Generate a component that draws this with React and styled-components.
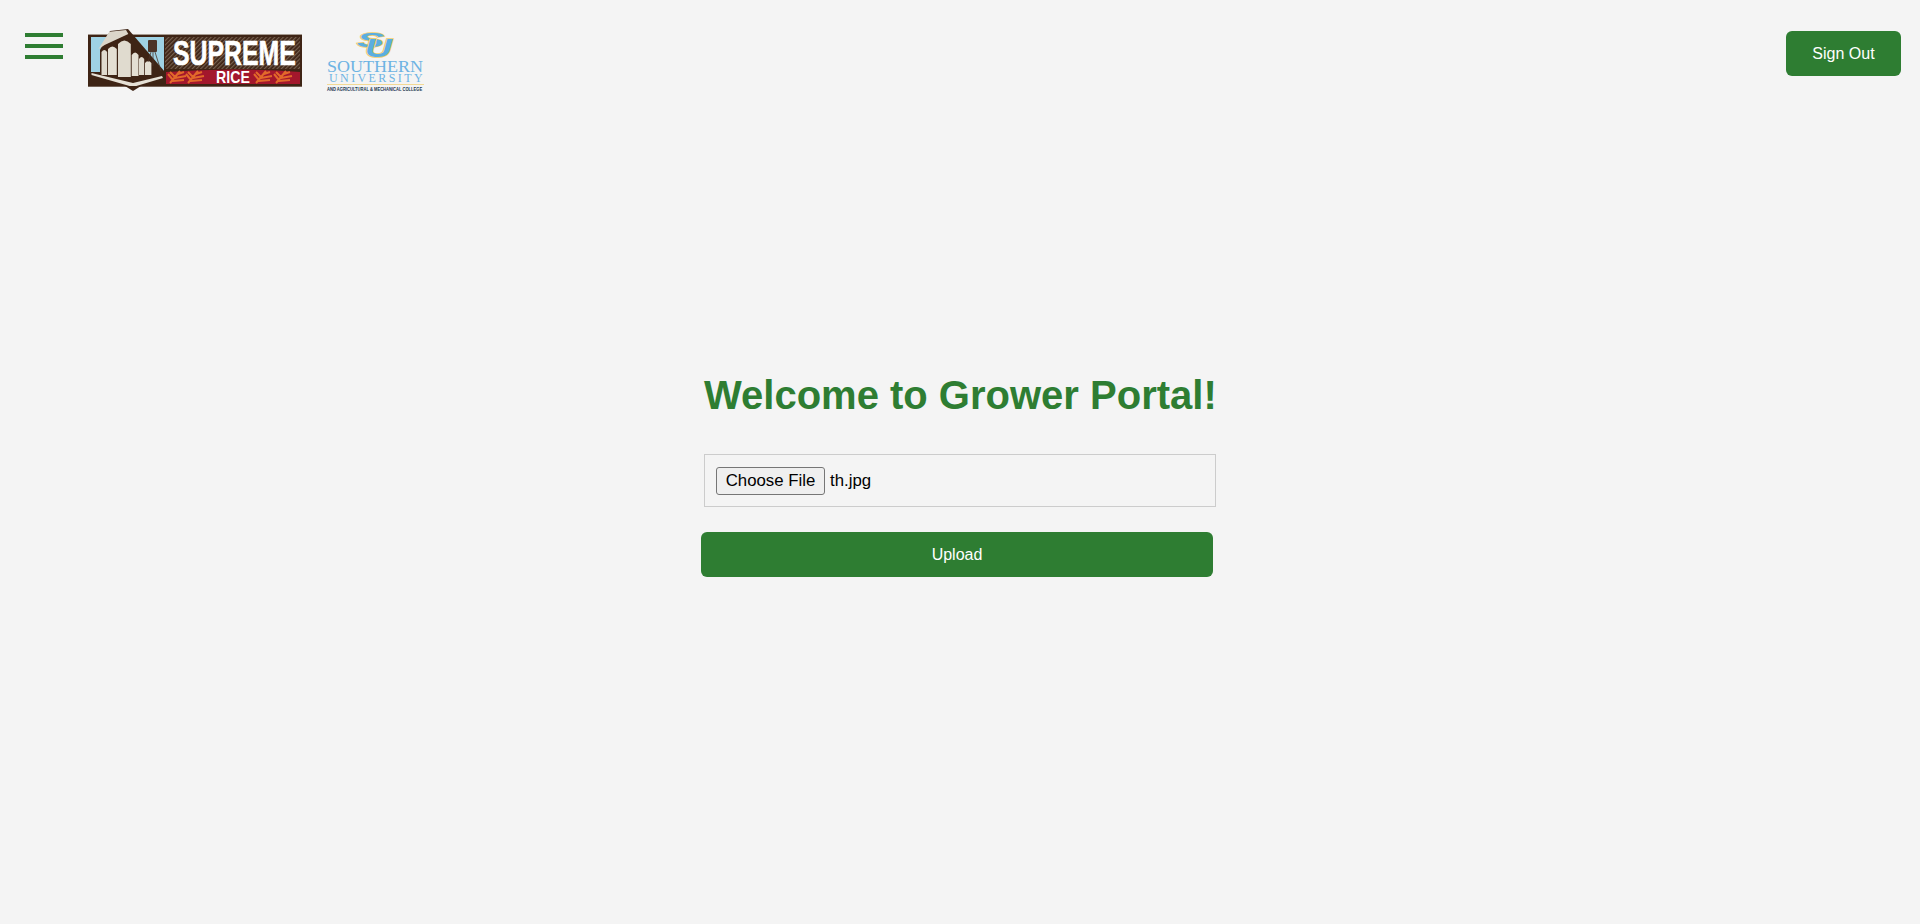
import React from 'react';
import styled, { createGlobalStyle } from 'styled-components';

const GlobalStyle = createGlobalStyle`
  html, body {
    margin: 0;
    padding: 0;
    background-color: #f4f4f4;
    font-family: "Liberation Sans", Arial, sans-serif;
  }
`;

const Page = styled.div`
  min-height: 924px;
  box-sizing: border-box;
  display: flex;
  flex-direction: column;
`;

const Header = styled.header`
  display: flex;
  align-items: flex-start;
  padding: 28px 19px 0 25px;
`;

const MenuButton = styled.button`
  display: flex;
  flex-direction: column;
  gap: 7.5px;
  width: 38px;
  margin: 5px 25px 0 0;
  padding: 0;
  border: none;
  background: none;
  cursor: pointer;
`;

const MenuBar = styled.span`
  display: block;
  height: 3.5px;
  background-color: #2e7d32;
`;

const Logos = styled.div`
  display: flex;
  align-items: flex-start;
  gap: 24px;
  flex: 1;
`;

const GreenButton = styled.button`
  background-color: #2e7d32;
  color: #fff;
  border: none;
  border-radius: 6px;
  font-family: inherit;
  font-size: 16px;
  height: 45px;
  cursor: pointer;
`;

const SignOut = styled(GreenButton)`
  width: 115px;
  margin-top: 3px;
`;

const Main = styled.main`
  display: flex;
  justify-content: center;
  padding-top: 279px;
`;

const Form = styled.form`
  width: 512px;
  display: flex;
  flex-direction: column;
`;

const Title = styled.h1`
  margin: 0 0 36px;
  color: #2e7d32;
  font-size: 40px;
  line-height: 46px;
  font-weight: 700;
  text-align: center;
  white-space: nowrap;
`;

const FileBox = styled.div`
  display: flex;
  align-items: center;
  gap: 5px;
  box-sizing: border-box;
  height: 53px;
  padding: 0 11px;
  border: 1px solid #ccc;
  font-size: 16.8px;
  color: #000;
`;

const ChooseFile = styled.button`
  box-sizing: border-box;
  height: 28px;
  width: 109px;
  padding: 0;
  border: 1px solid #767676;
  border-radius: 3px;
  background-color: #efefef;
  color: #000;
  font-family: inherit;
  font-size: 16.8px;
`;

const Upload = styled(GreenButton)`
  width: 512px;
  margin: 25px 0 0 -3px;
`;

const wheatSpots = [82, 100, 168, 188];

const SupremeLogo = () => (
  <svg width="214" height="64" viewBox="0 0 214 64" aria-label="Supreme Rice">
    <defs>
      <pattern id="hatch" width="3" height="3" patternUnits="userSpaceOnUse" patternTransform="rotate(-45)">
        <rect width="3" height="3" fill="#3e2415" />
        <rect width="3" height="1.2" fill="#75604f" />
      </pattern>
    </defs>
    <rect x="0" y="6" width="214" height="52.7" fill="#3e2415" />
    <rect x="0" y="6" width="214" height="1" fill="#a59a90" />
    <rect x="3" y="9" width="73" height="35" fill="#9fd2e4" />
    <polygon points="40,1 77,44 77,48 12,48 12,22 22,3" fill="#3e2415" />
    <polygon points="10.300,21.300 21.300,3.700 38,2 40.300,6 16.600,17" fill="#dbd6ca" />
    <path d="M13.500 47V24q2.800-4 5.600 0V47z" fill="#e0dbcf" />
    <path d="M20 47V21q4.400-5 8.800 0V47z" fill="#e4dfd3" />
    <path d="M30 49V16q6.400-7 12.800 0V49z" fill="#e0dbcf" />
    <path d="M43.700 48V27q3.400-5 6.800 0V48z" fill="#e4dfd3" />
    <path d="M51 47V31q2.600-4 5.200 0V47z" fill="#e0dbcf" />
    <path d="M57 47V35q3.200-4 6.400 0V47z" fill="#e4dfd3" />
    <rect x="60" y="12" width="9" height="12" rx="1" fill="#4c3428" />
    <path d="M63 24L60 34M67 24L73 43M65 24V38" stroke="#4c3428" strokeWidth="0.8" />
    <polygon points="3.500,45 45,55 74,48 75,50 45,59 3.500,47" fill="#e6e1d6" />
    <polygon points="37,58 45,63 53,58" fill="#3e2415" />
    <rect x="77" y="9" width="135" height="32" fill="url(#hatch)" />
    <path d="M78 44Q145 39 212 44V56H78z" fill="#a3172c" />
    {wheatSpots.map((x) => (
      <path
        key={x}
        d={`M${x} 55L${x + 10} 43M${x + 3} 52L${x - 2} 46M${x + 5} 49L${x} 44M${x + 5} 50L${x + 16} 48M${x + 3} 53L${x + 14} 52M${x + 8} 46L${x + 14} 44`}
        stroke="#e2692a"
        strokeWidth="2"
        fill="none"
      />
    ))}
    <text transform="translate(85 37) scale(0.69 1)" fontFamily="Liberation Sans" fontWeight="700" fontSize="36" fill="#fff" stroke="#fff" strokeWidth="0.7">SUPREME</text>
    <text transform="translate(128 54.700) scale(0.86 1)" fontFamily="Liberation Sans" fontWeight="700" fontSize="16.500" fill="#fff">RICE</text>
  </svg>
);

const SouthernLogo = () => (
  <svg width="100" height="65" viewBox="0 0 100 65" aria-label="Southern University">
    <g fontFamily="Liberation Sans" fontWeight="700" fontStyle="italic" fontSize="24" fill="#5aaee0" stroke="#f2cd6b" strokeWidth="1.500" style={{ paintOrder: 'stroke' }}>
      <text transform="translate(31 19) scale(1.700 0.880)">S</text>
      <text transform="translate(39 28.500) scale(1.550 1.050)">U</text>
    </g>
    <text transform="translate(1 44.300) scale(1.060 1)" fontFamily="Liberation Serif" fontSize="17" fill="#6db3e3">SOUTHERN</text>
    <text x="3" y="54.300" fontFamily="Liberation Serif" fontSize="12" letterSpacing="2.400" fill="#6db3e3">UNIVERSITY</text>
    <rect x="1" y="56" width="97" height="0.7" fill="#f2cd6b" />
    <text transform="translate(1 63) scale(0.680 1)" fontFamily="Liberation Sans" fontWeight="700" fontSize="6" fill="#22364f">AND AGRICULTURAL &amp; MECHANICAL COLLEGE</text>
  </svg>
);

const App = () => (
  <Page>
    <GlobalStyle />
    <Header>
      <MenuButton type="button" aria-label="Menu">
        <MenuBar />
        <MenuBar />
        <MenuBar />
      </MenuButton>
      <Logos>
        <SupremeLogo />
        <SouthernLogo />
      </Logos>
      <SignOut type="button">Sign Out</SignOut>
    </Header>
    <Main>
      <Form>
        <Title>Welcome to Grower Portal!</Title>
        <FileBox>
          <ChooseFile type="button">Choose File</ChooseFile>
          <span>th.jpg</span>
        </FileBox>
        <Upload type="button">Upload</Upload>
      </Form>
    </Main>
  </Page>
);

export default App;
